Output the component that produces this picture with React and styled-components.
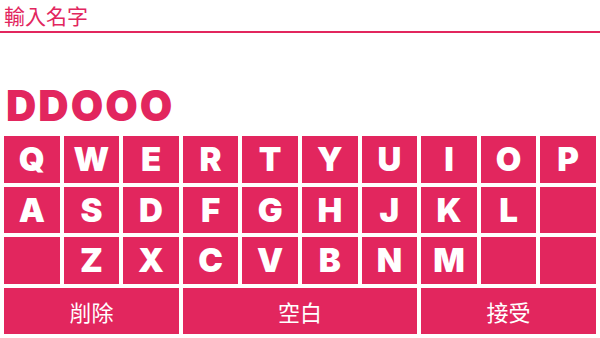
import React from 'react';
import styled, { createGlobalStyle } from 'styled-components';

const GlobalStyle = createGlobalStyle`
  html, body {
    margin: 0;
    padding: 0;
    background: #fff;
  }
  * {
    box-sizing: border-box;
  }
`;

const PINK = '#e2265e';

const rows = [
  ['Q', 'W', 'E', 'R', 'T', 'Y', 'U', 'I', 'O', 'P'],
  ['A', 'S', 'D', 'F', 'G', 'H', 'J', 'K', 'L', ''],
  ['', 'Z', 'X', 'C', 'V', 'B', 'N', 'M', '', ''],
];

const actions = [
  { label: '削除', span: 3 },
  { label: '空白', span: 4 },
  { label: '接受', span: 3 },
];

const Page = styled.div`
  width: 600px;
  height: 338px;
  display: flex;
  flex-direction: column;
  overflow: hidden;
`;

const Header = styled.div`
  height: 33px;
  padding-left: 4px;
  border-bottom: 2px solid ${PINK};
  color: ${PINK};
  font-family: "Noto Sans CJK TC", "Noto Sans", sans-serif;
  font-size: 21px;
  line-height: 31px;
`;

const NameRow = styled.div`
  height: 103px;
  display: flex;
  align-items: flex-end;
  padding: 0 6px 9px;
`;

const Name = styled.div`
  color: ${PINK};
  font-family: Inter, "DejaVu Sans", sans-serif;
  font-weight: 900;
  font-size: 42px;
  line-height: 42px;
  letter-spacing: 2px;
`;

const Keyboard = styled.div`
  flex: 1;
  display: grid;
  grid-template-columns: repeat(10, 1fr);
  grid-auto-rows: 46.5px;
  gap: 4px;
  padding: 0 4px 4px;
`;

const Key = styled.div`
  grid-column: span ${({ $span }) => $span || 1};
  display: flex;
  align-items: center;
  justify-content: center;
  background: ${PINK};
  color: #fff;
  font-family: ${({ $cjk }) =>
    $cjk ? '"Noto Sans CJK TC", "Noto Sans", sans-serif' : 'Inter, "DejaVu Sans", sans-serif'};
  font-weight: ${({ $cjk }) => ($cjk ? 400 : 900)};
  font-size: ${({ $cjk }) => ($cjk ? '22px' : '33px')};
  user-select: none;
`;

export default function App() {
  return (
    <>
      <GlobalStyle />
      <Page>
        <Header>輸入名字</Header>
        <NameRow>
          <Name>DDOOO</Name>
        </NameRow>
        <Keyboard>
          {rows.map((row, r) =>
            row.map((k, i) => <Key key={`${r}-${i}`}>{k}</Key>)
          )}
          {actions.map((a) => (
            <Key key={a.label} $span={a.span} $cjk>
              {a.label}
            </Key>
          ))}
        </Keyboard>
      </Page>
    </>
  );
}
